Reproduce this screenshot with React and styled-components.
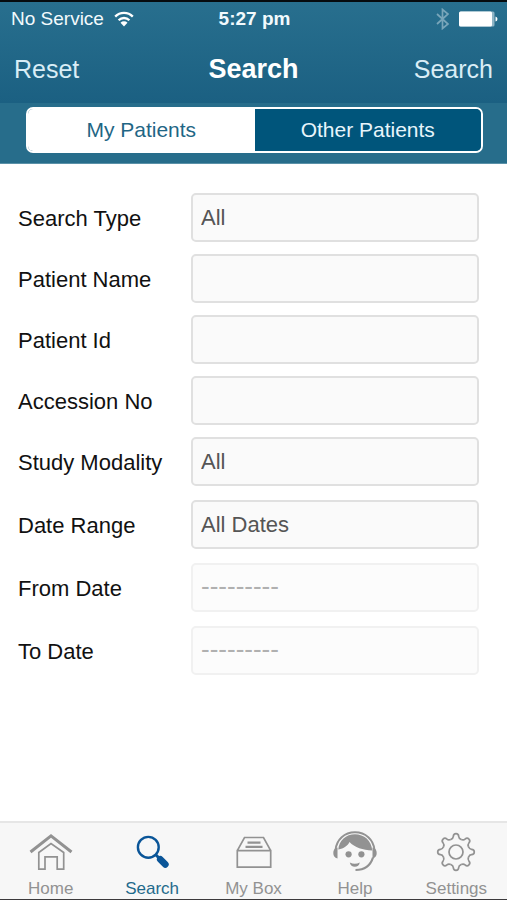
import { useState } from 'react'
import styled, { createGlobalStyle, css } from 'styled-components'

const GlobalStyle = createGlobalStyle`
  * {
    box-sizing: border-box;
  }
  body {
    margin: 0;
    background: #fff;
    font-family: 'Liberation Sans', Arial, Helvetica, sans-serif;
  }
  button,
  input,
  select {
    font-family: inherit;
    margin: 0;
  }
`
const StyledApp = styled.div`
  display: flex;
  flex-direction: column;
  min-height: 100vh;
  border-top: 2px solid #060b0e;
  border-bottom: 1px solid #3c3a3c;
`
const StyledHeader = styled.header`
  background: linear-gradient(#286f8e, #1b6082);
  color: #fff;
`
const StyledStatusBar = styled.div`
  display: grid;
  grid-template-columns: 1fr auto 1fr;
  align-items: center;
  height: 33px;
  padding: 0 9px 0 11px;
  color: #f2fafd;
  font-size: 19px;
`
const StyledStatusGroup = styled.div`
  display: flex;
  align-items: center;
  gap: 10px;
  justify-content: ${(props) => (props.$end ? 'flex-end' : 'flex-start')};
`
const StyledTime = styled.span`
  font-weight: 700;
`
const StyledNavBar = styled.div`
  display: grid;
  grid-template-columns: 1fr auto 1fr;
  align-items: center;
  height: 68px;
  padding: 0 14px;
`
const StyledTitle = styled.h1`
  margin: 0;
  font-size: 27px;
  line-height: 32px;
`
const StyledNavButton = styled.button`
  justify-self: ${(props) => (props.$end ? 'end' : 'start')};
  padding: 0;
  border: 0;
  background: none;
  color: #d9edf6;
  font-size: 25px;
  line-height: 32px;
  cursor: pointer;
`
const StyledSegmentStrip = styled.div`
  padding: 4px 24px 10px 26px;
  background: #276d8b;
  border-bottom: 1px solid #5a91a8;
`
const StyledSegments = styled.div`
  display: flex;
  height: 46px;
  border: 2px solid #fff;
  border-radius: 7px;
  overflow: hidden;
`
const StyledSegment = styled.button`
  flex: 1;
  padding: 0;
  border: 0;
  font-size: 21px;
  cursor: pointer;
  background: ${(props) => (props.$active ? '#fff' : '#00557b')};
  color: ${(props) => (props.$active ? '#1f6685' : '#e8f5fb')};
`
const StyledForm = styled.form`
  flex: 1;
  display: flex;
  flex-direction: column;
  gap: 14px;
  padding: 29px 28px 29px 18px;
`
const StyledGroup = styled.div`
  display: flex;
  flex-direction: column;
  gap: ${(props) => (props.$loose ? '14px' : '12px')};
`
const StyledRow = styled.div`
  display: grid;
  grid-template-columns: 173px 1fr;
  align-items: center;
`
const StyledLabel = styled.label`
  padding-top: 2px;
  color: #111;
  font-size: 22px;
  line-height: 26px;
`
const control = css`
  width: 100%;
  min-width: 0;
  height: 49px;
  padding: 0 8px;
  border: 2px solid #e0e0e0;
  border-radius: 5px;
  background: #fafafa;
  color: #555;
  font-size: 22px;
  outline: none;
`
const StyledInput = styled.input`
  ${control}
  &:disabled {
    border-color: #f1f1f1;
    background: #fcfcfc;
  }
  &::placeholder {
    color: #b0b0b0;
    font-size: 26px;
    opacity: 1;
  }
`
const StyledSelect = styled.select`
  ${control}
  appearance: none;
`
const StyledTabBar = styled.nav`
  display: flex;
  height: 78px;
  border-top: 2px solid #e6e6e6;
  background: #f7f7f7;
`
const StyledTab = styled.a`
  flex: 1;
  display: flex;
  flex-direction: column;
  align-items: center;
  padding-top: 7px;
  color: ${(props) => (props.$active ? '#1f6a8c' : '#929292')};
  font-size: 17px;
  line-height: 30px;
  text-decoration: none;
  svg {
    flex: none;
    color: ${(props) => (props.$active ? '#0a5598' : '#929292')};
  }
`

function WifiIcon() {
  return (
    <svg width="20" height="16" viewBox="0 0 20 16" fill="none">
      <path d="M1.2 5.600a12.300 12.300 0 0 1 17.600 0" stroke="#fff" strokeWidth="2.3" />
      <path d="M4.600 9.200a7.700 7.700 0 0 1 10.800 0" stroke="#fff" strokeWidth="2.3" />
      <path d="M10 15.500 6.500 11.800a4.900 4.900 0 0 1 7 0z" fill="#fff" />
    </svg>
  )
}

function BluetoothIcon() {
  return (
    <svg width="13" height="22" viewBox="0 0 13 22" fill="none">
      <path
        d="M1 6l11 10-5.500 4.500V1.500L12 6 1 16"
        stroke="#79a6ba"
        strokeWidth="1.700"
      />
    </svg>
  )
}

function BatteryIcon() {
  return (
    <svg width="39" height="16" viewBox="0 0 39 16">
      <rect x="0.5" y="0.5" width="35" height="15" rx="1.5" fill="#8fb5c6" />
      <rect x="0" y="0.5" width="33" height="15" rx="1.5" fill="#fff" />
      <path d="M36.5 5.5q2 .5 2 2.5t-2 2.5z" fill="#fff" />
    </svg>
  )
}

function TabIcon({ children }) {
  return (
    <svg
      width="44"
      height="44"
      viewBox="0 0 44 44"
      fill="none"
      stroke="currentColor"
      strokeWidth="1.700"
    >
      {children}
    </svg>
  )
}

const gearTeeth = Array.from({ length: 8 }, (_, i) => i * 45)

function HomeIcon() {
  return (
    <TabIcon>
      <path d="M1.500 22 22 5.800 42.500 22" strokeWidth="3" />
      <path d="M9.800 39.200V22.500L22 13.500l12.700 9v16.700h-6.500V26.800H16v12.400z" />
    </TabIcon>
  )
}

function SearchIcon() {
  return (
    <TabIcon>
      <circle cx="18.300" cy="17.300" r="10.400" strokeWidth="2.400" />
      <path d="M25.500 24.500l4 4" strokeWidth="3" />
      <path d="M30.300 29.300l5 5" strokeWidth="6.800" strokeLinecap="round" />
    </TabIcon>
  )
}

function BoxIcon() {
  return (
    <TabIcon>
      <path d="M5.300 20.700h33.400v16.500H5.300zL12.500 7.500h19l7.200 13.200" />
      <path d="M15.500 12.700h13M13.500 16.900h17" strokeWidth="2.200" />
    </TabIcon>
  )
}

function HelpIcon() {
  return (
    <TabIcon>
      <path d="M2.500 20C3.500 9.500 11.500 2.300 22 2.300S40.500 9.500 41.500 20" strokeWidth="2" />
      <path
        d="M5.300 19.500C6 10.500 13 4.300 22 4.300s16.500 6.200 17.300 16.200C30 20 21.500 17.500 16.500 12 14.500 16 11 18.300 5.300 19.500z"
        fill="currentColor"
        stroke="none"
      />
      <path
        d="M4.500 17.500v11C1.500 28 .3 25.700.3 23s1.200-5 4.200-5.500zM39.500 17.500v11c3-.5 4.200-2.800 4.200-5.500s-1.200-5-4.200-5.500z"
        fill="currentColor"
        stroke="none"
      />
      <path d="M40 27.500C37.500 35.500 31.500 40 22.500 40" strokeWidth="2.200" />
      <circle cx="15.600" cy="24.300" r="3.100" fill="currentColor" stroke="none" />
      <circle cx="28.400" cy="24.300" r="3.100" fill="currentColor" stroke="none" />
      <path
        d="M16.800 32.500q5 2.500 10 0-1 4.300-5 4.300t-5-4.300z"
        fill="currentColor"
        stroke="none"
      />
    </TabIcon>
  )
}

function SettingsIcon() {
  return (
    <TabIcon>
      <circle cx="22" cy="22" r="7" />
      {gearTeeth.map((angle) => (
        <path
          key={angle}
          transform={`rotate(${angle} 22 22)`}
          d="M16.800 9.500C18.500 8.800 19.200 8.300 19.300 6.500 19.400 4.500 20.200 3.700 22 3.700s2.600.8 2.700 2.800c.1 1.800.8 2.300 2.500 3"
        />
      ))}
    </TabIcon>
  )
}

const tabs = [
  { name: 'Home', Icon: HomeIcon },
  { name: 'Search', Icon: SearchIcon },
  { name: 'My Box', Icon: BoxIcon },
  { name: 'Help', Icon: HelpIcon },
  { name: 'Settings', Icon: SettingsIcon },
]

const patientFields = [
  { id: 'searchType', label: 'Search Type', options: ['All'] },
  { id: 'patientName', label: 'Patient Name' },
  { id: 'patientId', label: 'Patient Id' },
  { id: 'accessionNo', label: 'Accession No' },
  { id: 'studyModality', label: 'Study Modality', options: ['All'] },
]

const dateFields = [
  { id: 'dateRange', label: 'Date Range', options: ['All Dates'] },
  { id: 'fromDate', label: 'From Date', placeholder: '---------', disabled: true },
  { id: 'toDate', label: 'To Date', placeholder: '---------', disabled: true },
]

function Field({ id, label, options, ...rest }) {
  return (
    <StyledRow>
      <StyledLabel htmlFor={id}>{label}</StyledLabel>
      {options ? (
        <StyledSelect id={id} name={id}>
          {options.map((option) => (
            <option key={option}>{option}</option>
          ))}
        </StyledSelect>
      ) : (
        <StyledInput id={id} name={id} type="text" {...rest} />
      )}
    </StyledRow>
  )
}

function App() {
  const [segment, setSegment] = useState('My Patients')

  return (
    <StyledApp>
      <GlobalStyle />
      <StyledHeader>
        <StyledStatusBar>
          <StyledStatusGroup>
            <span>No Service</span>
            <WifiIcon />
          </StyledStatusGroup>
          <StyledTime>5:27 pm</StyledTime>
          <StyledStatusGroup $end>
            <BluetoothIcon />
            <BatteryIcon />
          </StyledStatusGroup>
        </StyledStatusBar>
        <StyledNavBar>
          <StyledNavButton type="reset" form="searchForm">
            Reset
          </StyledNavButton>
          <StyledTitle>Search</StyledTitle>
          <StyledNavButton type="submit" form="searchForm" $end>
            Search
          </StyledNavButton>
        </StyledNavBar>
      </StyledHeader>

      <StyledSegmentStrip>
        <StyledSegments>
          {['My Patients', 'Other Patients'].map((name) => (
            <StyledSegment
              key={name}
              type="button"
              aria-pressed={segment === name}
              $active={segment === name}
              onClick={() => setSegment(name)}
            >
              {name}
            </StyledSegment>
          ))}
        </StyledSegments>
      </StyledSegmentStrip>

      <StyledForm id="searchForm" onSubmit={(e) => e.preventDefault()}>
        <StyledGroup>
          {patientFields.map((field) => (
            <Field key={field.id} {...field} />
          ))}
        </StyledGroup>
        <StyledGroup $loose>
          {dateFields.map((field) => (
            <Field key={field.id} {...field} />
          ))}
        </StyledGroup>
      </StyledForm>

      <StyledTabBar>
        {tabs.map(({ name, Icon }) => (
          <StyledTab key={name} href="#" $active={name === 'Search'}>
            <Icon />
            {name}
          </StyledTab>
        ))}
      </StyledTabBar>
    </StyledApp>
  )
}

export default App
